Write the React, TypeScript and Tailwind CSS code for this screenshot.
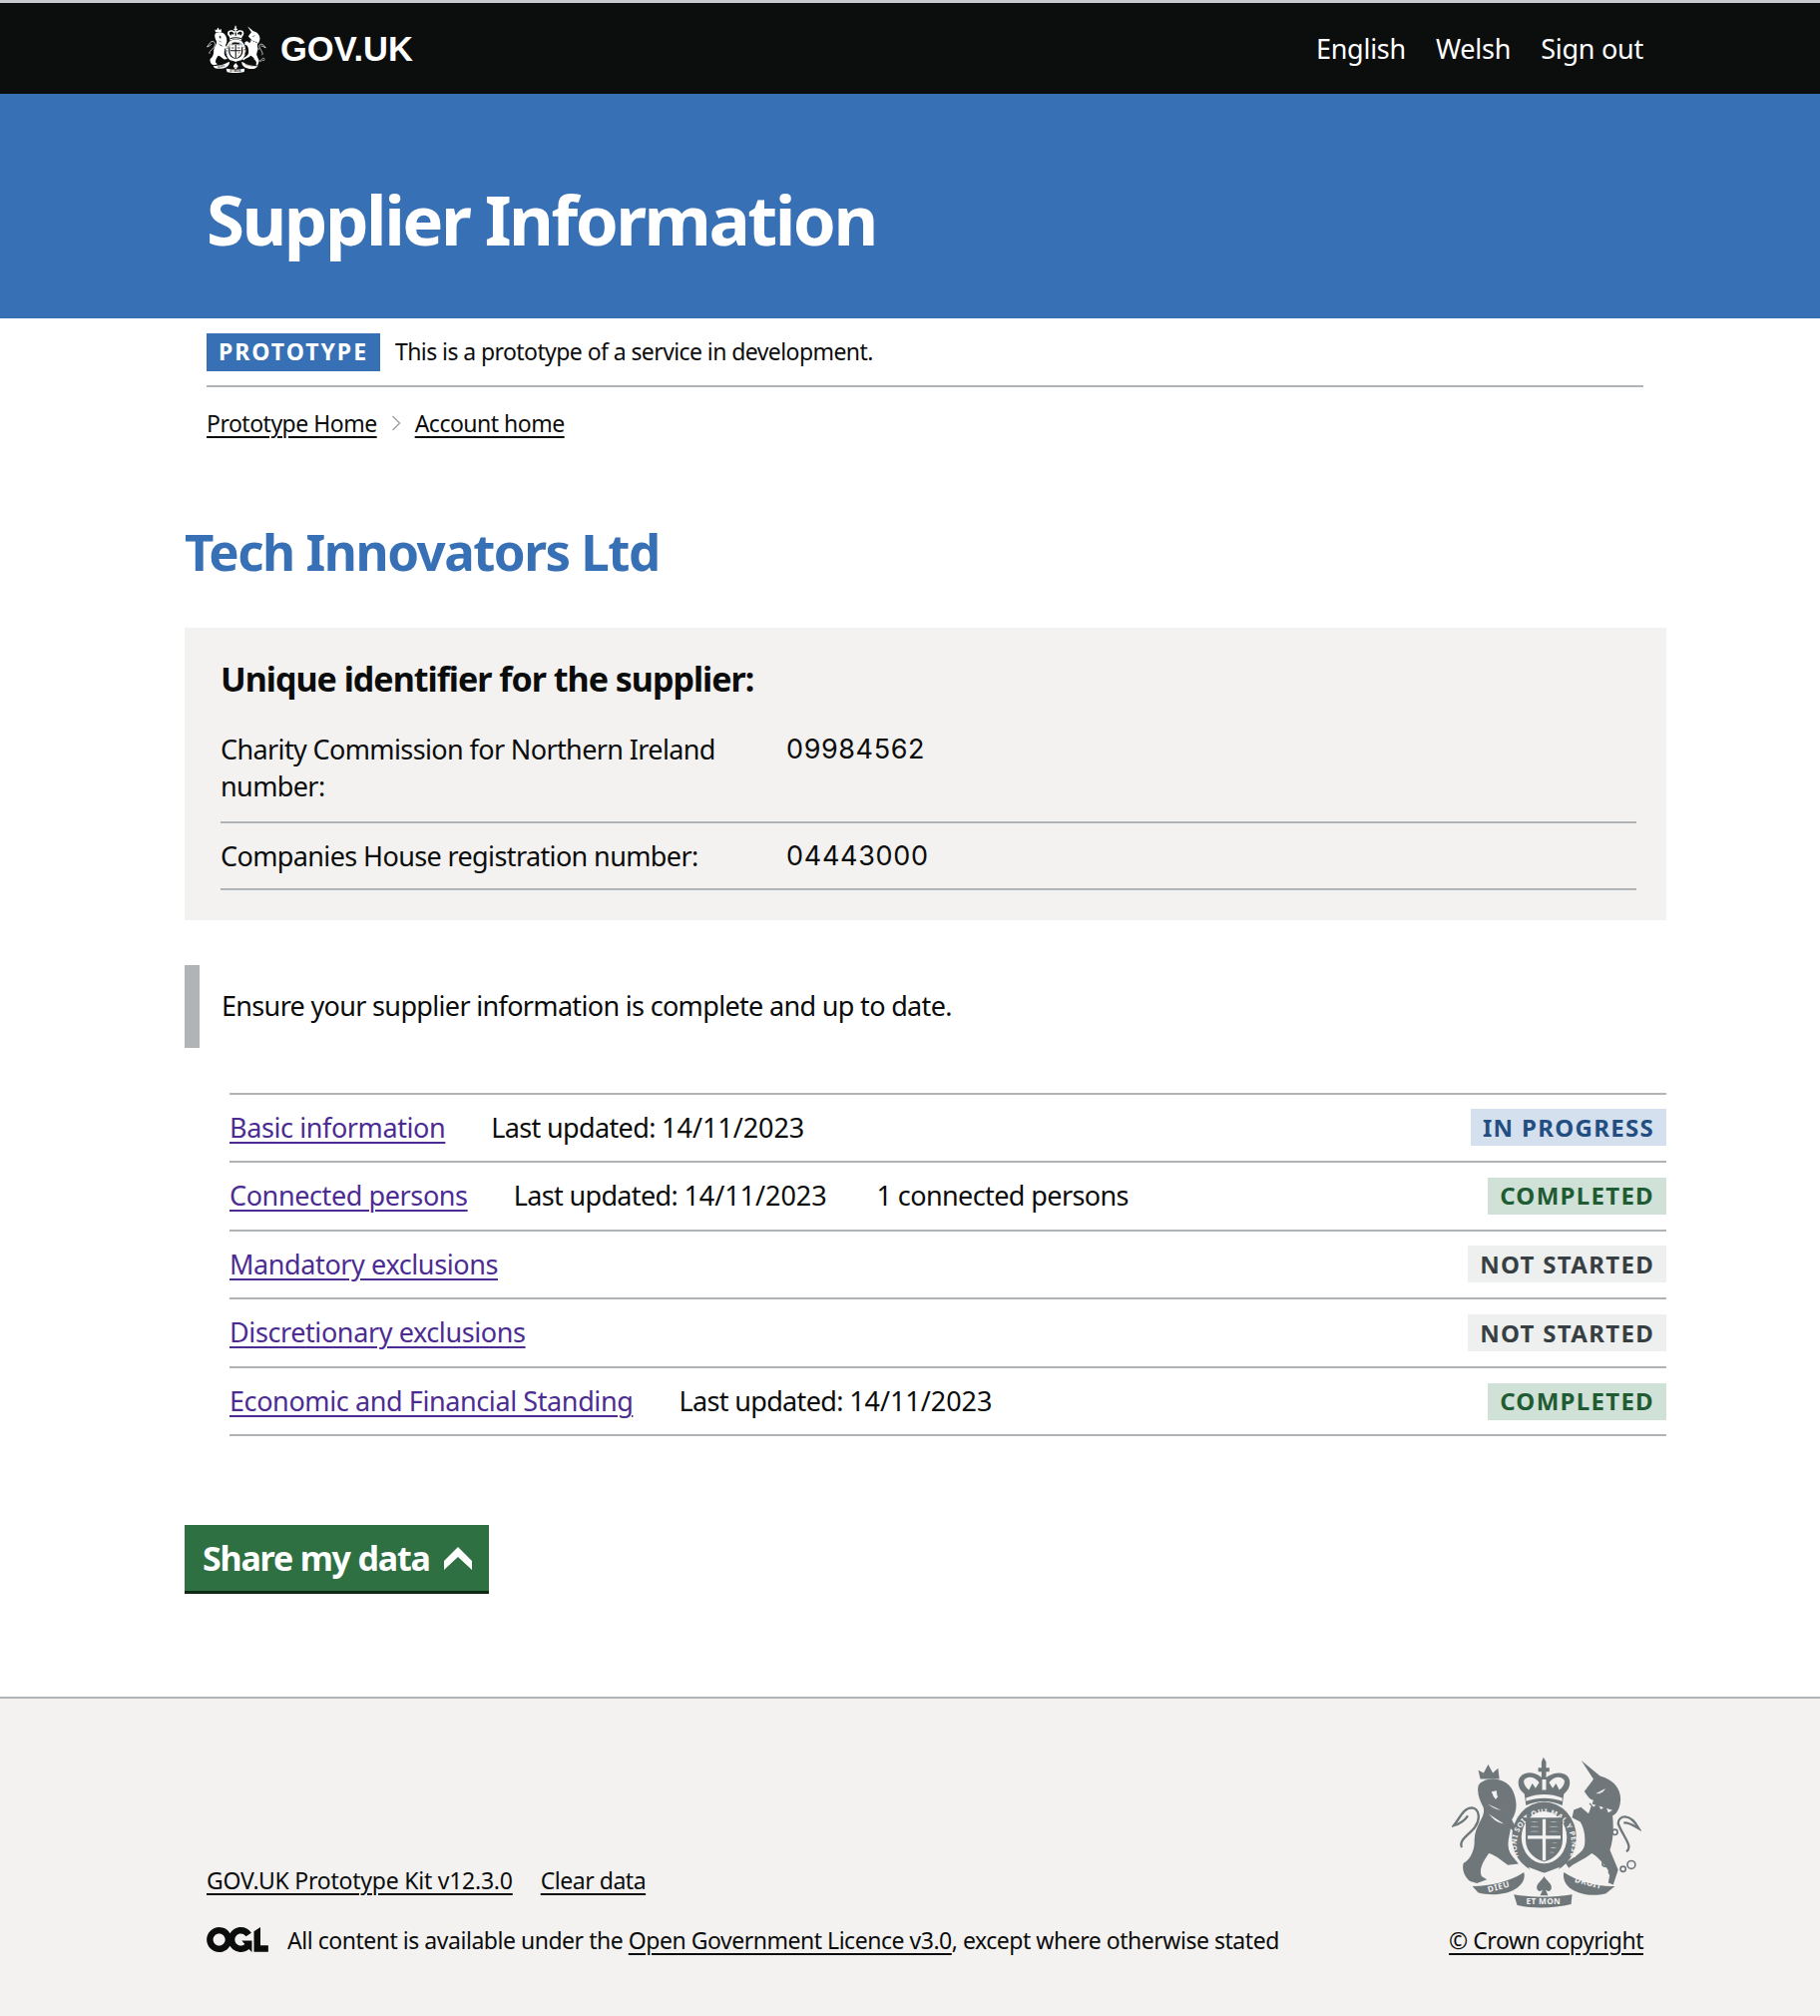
const font = "font-['Noto_Sans',sans-serif]";

function Crest({ className, cut }: { className: string; cut: string }) {
  const label = { fontFamily: "Noto Sans, sans-serif", fontWeight: 700 };
  return (
    <svg viewBox="160 120 575 470" className={className} fill="currentColor" aria-hidden="true">
      {/* lion */}
      <path d="M240 215C250 190 320 180 345 230C358 260 360 290 342 318L368 372L338 345C335 372 322 395 340 425L362 452L330 456C310 442 292 425 272 420C258 440 240 468 250 490L266 500L236 511L215 505C195 490 190 465 195 450C215 440 230 410 228 380C230 330 265 310 255 280C245 260 235 240 240 215Z" />
      <path d="M190 402C178 380 215 362 230 340C246 318 245 285 220 282C195 282 185 312 165 336C185 330 198 322 208 306" fill="none" stroke="currentColor" strokeWidth="7" />
      <path d="M246 194L240 168L256 176L270 150L284 176L300 162L304 194Z" />
      <path d="M250 186H296" stroke="currentColor" strokeWidth="3" className={cut} />
      <path d="M278 232L296 228L300 250L292 258L284 246Z M268 270C280 282 296 290 310 290 M270 300C285 320 300 330 320 332" fill="none" stroke="currentColor" strokeWidth="3" className={cut} />
      {/* unicorn */}
      <path d="M553 138L610 185C650 195 675 225 672 260C670 285 660 300 648 306C652 345 650 380 640 410L665 470L650 516L635 510L640 480C622 450 604 432 585 420C560 440 530 450 515 465L505 450C530 430 558 420 563 395C566 370 562 345 550 325L525 312L530 288L552 280L575 300L590 258C578 258 572 245 562 232L590 195Z" />
      <path d="M690 415C712 400 680 370 665 330C665 305 700 295 728 345C710 335 695 325 682 328" fill="none" stroke="currentColor" strokeWidth="7" />
      <path d="M578 268L590 282L602 272L612 290L626 280L634 300L650 290" fill="none" stroke="currentColor" strokeWidth="4" className={cut} />
      <path d="M595 240C610 242 622 235 628 222" fill="none" stroke="currentColor" strokeWidth="3" className={cut} />
      <g fill="none" stroke="currentColor" strokeWidth="5">
        <circle cx="625" cy="452" r="8" />
        <circle cx="645" cy="476" r="8" />
        <circle cx="680" cy="468" r="8" />
        <circle cx="705" cy="455" r="12" />
        <circle cx="655" cy="356" r="8" />
      </g>
      {/* crown */}
      <path d="M438 128L446 142V160H456V172H446V190C480 165 518 175 518 205C518 220 510 232 500 240L495 275C460 258 420 258 385 275L380 240C368 230 360 218 362 200C365 175 405 165 432 190V172H422V160H432V142Z" />
      <path d="M378 200C385 185 410 185 425 205L414 222L404 208L394 228C385 220 378 212 378 200Z M502 200C495 185 470 185 455 205L466 222L476 208L486 228C495 220 502 212 502 200Z M434 196H446V228H434Z" className={cut} />
      <path d="M385 252C420 238 460 238 495 252L495 262C460 250 420 250 385 262Z" className={cut} />
      {/* garter and shield */}
      <ellipse cx="440" cy="372" rx="98" ry="108" />
      <ellipse cx="440" cy="372" rx="69" ry="79" className={cut} />
      <path id="garter" d="M362 430A84 94 0 1 1 518 430" fill="none" />
      <text fontSize="22" style={label} className={cut} letterSpacing="1.5">
        <textPath href="#garter" startOffset="50%" textAnchor="middle">HONI SOIT QUI MAL Y PENSE</textPath>
      </text>
      <path d="M384 312H496V380C496 415 468 438 440 446C412 438 384 415 384 380Z" />
      <path d="M390 366H490V376H445V442H435V376H390Z M435 316H445V366H435Z" className={cut} />
      <path d="M395 326C405 322 415 322 428 326M395 340C405 336 415 336 428 340M395 354C405 350 415 350 428 354M452 326C462 322 475 322 486 326M452 340C462 336 475 336 486 340M452 354C462 350 475 350 486 354M460 390C468 386 476 386 484 390M456 404C464 400 472 400 480 404M456 418C462 414 468 414 472 418M398 386V412M408 386V424M418 386V432" fill="none" stroke="currentColor" strokeWidth="3" className={cut} />
      <path d="M392 462L440 480L488 462L478 476L440 490L402 476Z" className={cut} />
      {/* motto ribbon */}
      <path d="M222 520C280 520 340 505 378 478C385 495 372 520 350 530C320 548 270 548 240 540Z" />
      <path d="M500 478C540 505 600 522 655 520L628 542C590 552 550 546 525 530C505 520 495 495 500 478Z" />
      <path d="M348 545C400 555 470 555 525 545L522 575C470 588 400 588 358 578Z" />
      <path d="M440 490C448 505 465 512 462 528C458 540 446 534 444 530L452 548H428L436 530C434 534 422 540 418 528C415 512 432 505 440 490Z" />
      <text x="304" y="530" fontSize="25" textAnchor="middle" style={label} transform="rotate(-15 304 530)" className={cut} letterSpacing="2">DIEU</text>
      <text x="438" y="576" fontSize="25" textAnchor="middle" style={label} className={cut} letterSpacing="1">ET MON</text>
      <text x="572" y="518" fontSize="25" textAnchor="middle" style={label} transform="rotate(15 572 518)" className={cut} letterSpacing="1">DROIT</text>
    </svg>
  );
}

function Tag({ label, className }: { label: string; className: string }) {
  return (
    <strong className={`ml-auto h-[37px] flex items-center px-3 text-[24px] font-bold tracking-[1.3px] leading-none ${className}`}>
      {label}
    </strong>
  );
}

function Row({ name, updated, extra, children }: { name: string; updated?: string; extra?: string; children: React.ReactNode }) {
  return (
    <li className="h-[68.6px] flex items-center border-b-2 border-[#b1b4b6] text-[27px]">
      <a className="text-[#4c2c92] underline underline-offset-4 decoration-2 tracking-[-0.4px]">{name}</a>
      {updated && (
        <span className="ml-[46px] tracking-[-0.65px]">
          Last updated: <span className="tracking-[-0.05px]">{updated}</span>
        </span>
      )}
      {extra && <span className="ml-[50px] tracking-[-0.6px]">{extra}</span>}
      {children}
    </li>
  );
}

const inProgress = "bg-[#d4e0ee] text-[#234e82]";
const completed = "bg-[#d0e1d8] text-[#1f5b33]";
const notStarted = "bg-[#eef0f0] text-[#383f43]";

export default function App() {
  return (
    <div className={`${font} text-[#0b0c0c] min-h-[2020px] flex flex-col`}>
      <header className="h-[94px] bg-[#0c0e0e] border-t-[3px] border-[#c8c9cc] text-white">
        <div className="ml-[207px] w-[1440px] h-full flex items-center">
          <Crest className="w-[60px] h-[50px]" cut="fill-[#0c0e0e]" />
          <span className="ml-[14px] text-[34.5px] font-bold font-['Liberation_Sans',sans-serif] pt-[2px]">GOV.UK</span>
          <nav className="ml-auto flex gap-[30px] text-[27px] tracking-[-0.25px] pt-[1px]">
            <span>English</span>
            <span>Welsh</span>
            <span>Sign out</span>
          </nav>
        </div>
      </header>

      <div className="h-[225px] bg-[#3870b5] flex items-center">
        <h1 className="ml-[207px] text-[69px] font-bold text-white leading-none pt-[26px] tracking-[-2.5px]">Supplier Information</h1>
      </div>

      <div className="ml-[207px] w-[1440px]">
        <div className="h-[69px] flex items-center border-b-2 border-[#b1b4b6]">
          <strong className="h-[38px] px-3 flex items-center bg-[#3870b5] text-white text-[23px] font-bold tracking-[2px]">PROTOTYPE</strong>
          <span className="ml-[15px] text-[23px] tracking-[-0.58px]">This is a prototype of a service in development.</span>
        </div>
        <div className="mt-[19px] flex items-center text-[23px] tracking-[-0.5px]">
          <a className="underline underline-offset-4 decoration-2">Prototype Home</a>
          <svg viewBox="0 0 10 16" className="w-[10px] h-[16px] mx-[14px] text-[#9a9d9f]" fill="none" stroke="currentColor" strokeWidth="1.3">
            <path d="M1.5 1L8.5 8L1.5 15" />
          </svg>
          <a className="underline underline-offset-4 decoration-2">Account home</a>
        </div>
      </div>

      <main className="ml-[185px] w-[1485px] mt-[77px] flex-1">
        <h2 className="text-[51px] font-bold text-[#3870b5] leading-[66px] tracking-[-1.5px]">Tech Innovators Ltd</h2>

        <section className="mt-[44px] h-[293px] bg-[#f3f2f1] pl-[36px] pr-[30px] pt-[31px]">
          <h3 className="text-[34px] font-bold leading-[40px] tracking-[-1px]">Unique identifier for the supplier:</h3>
          <dl className="mt-[32px] text-[27px] leading-[37px] tracking-[-0.62px]">
            <div className="flex border-b-2 border-[#b1b4b6] pb-[17px]">
              <dt className="w-[567px] pr-6">Charity Commission for Northern Ireland number:</dt>
              <dd className="font-['Inter',sans-serif] tracking-[0.6px]">09984562</dd>
            </div>
            <div className="flex border-b-2 border-[#b1b4b6] py-[14px]">
              <dt className="w-[567px] pr-6">Companies House registration number:</dt>
              <dd className="font-['Inter',sans-serif] tracking-[0.7px]">04443000</dd>
            </div>
          </dl>
        </section>

        <div className="mt-[45px] h-[83px] border-l-[15px] border-[#b1b4b6] pl-[22px] flex items-center text-[27px] tracking-[-0.67px]">
          Ensure your supplier information is complete and up to date.
        </div>

        <ul className="mt-[45px] ml-[45px] border-t-2 border-[#b1b4b6]">
          <Row name="Basic information" updated="14/11/2023"><Tag label="IN PROGRESS" className={inProgress} /></Row>
          <Row name="Connected persons" updated="14/11/2023" extra="1 connected persons"><Tag label="COMPLETED" className={completed} /></Row>
          <Row name="Mandatory exclusions"><Tag label="NOT STARTED" className={notStarted} /></Row>
          <Row name="Discretionary exclusions"><Tag label="NOT STARTED" className={notStarted} /></Row>
          <Row name="Economic and Financial Standing" updated="14/11/2023"><Tag label="COMPLETED" className={completed} /></Row>
        </ul>

        <button className="mt-[89px] h-[69px] w-[305px] pl-[18px] flex items-center gap-[14px] bg-[#2f7043] border-b-[3px] border-[#0f2a14] text-white text-[34px] font-bold whitespace-nowrap tracking-[-1.2px]">
          Share my data
          <svg viewBox="0 0 28 23" className="w-[28px] h-[23px]" fill="currentColor">
            <path d="M14 0L28 14V23L14 10L0 23V14Z" />
          </svg>
        </button>
      </main>

      <footer className="h-[320px] bg-[#f3f2f1] border-t-2 border-[#b1b4b6]">
        <div className="ml-[207px] w-[1440px] h-full flex items-end pb-[59px] tracking-[-0.47px]">
          <div className="text-[23px]">
            <div className="flex gap-[28px]">
              <a className="underline underline-offset-4 decoration-2 tracking-[-0.23px]">GOV.UK Prototype Kit v12.3.0</a>
              <a className="underline underline-offset-4 decoration-2">Clear data</a>
            </div>
            <div className="mt-[25px] flex items-center">
              <svg viewBox="0 0 483.2 195.7" className="w-[62px] h-[25px]" fill="currentColor">
                <path d="M421.5 142.8V.1l-50.7 32.3v161.1h112.4v-50.7zm-122.3-9.6A47.12 47.12 0 0 1 221 97.8c0-26 21.1-47.1 47.1-47.1 16.7 0 31.4 8.7 39.7 21.8l42.7-27.2A97.63 97.63 0 0 0 268.1 0c-36.5 0-68.3 20.1-85.1 49.7A98 98 0 0 0 97.8 0C43.9 0 0 43.9 0 97.8s43.9 97.8 97.8 97.8c36.5 0 68.3-20.1 85.1-49.7a97.76 97.76 0 0 0 149.6 25.4l19.4 22.2h3v-87.8h-80l24.3 27.5zM97.8 145c-26 0-47.1-21.1-47.1-47.1s21.1-47.1 47.1-47.1 47.2 21 47.2 47S123.8 145 97.8 145" />
              </svg>
              <span className="ml-[19px]">
                All content is available under the{" "}
                <a className="underline underline-offset-4 decoration-2">Open Government Licence v3.0</a>, except where otherwise stated
              </span>
            </div>
          </div>
          <div className="ml-auto flex flex-col items-center text-[23px]">
            <Crest className="w-[190px] h-[155px] text-[#6f777b]" cut="fill-[#f3f2f1]" />
            <a className="mt-[14px] underline underline-offset-4 decoration-2">© Crown copyright</a>
          </div>
        </div>
      </footer>
    </div>
  );
}
